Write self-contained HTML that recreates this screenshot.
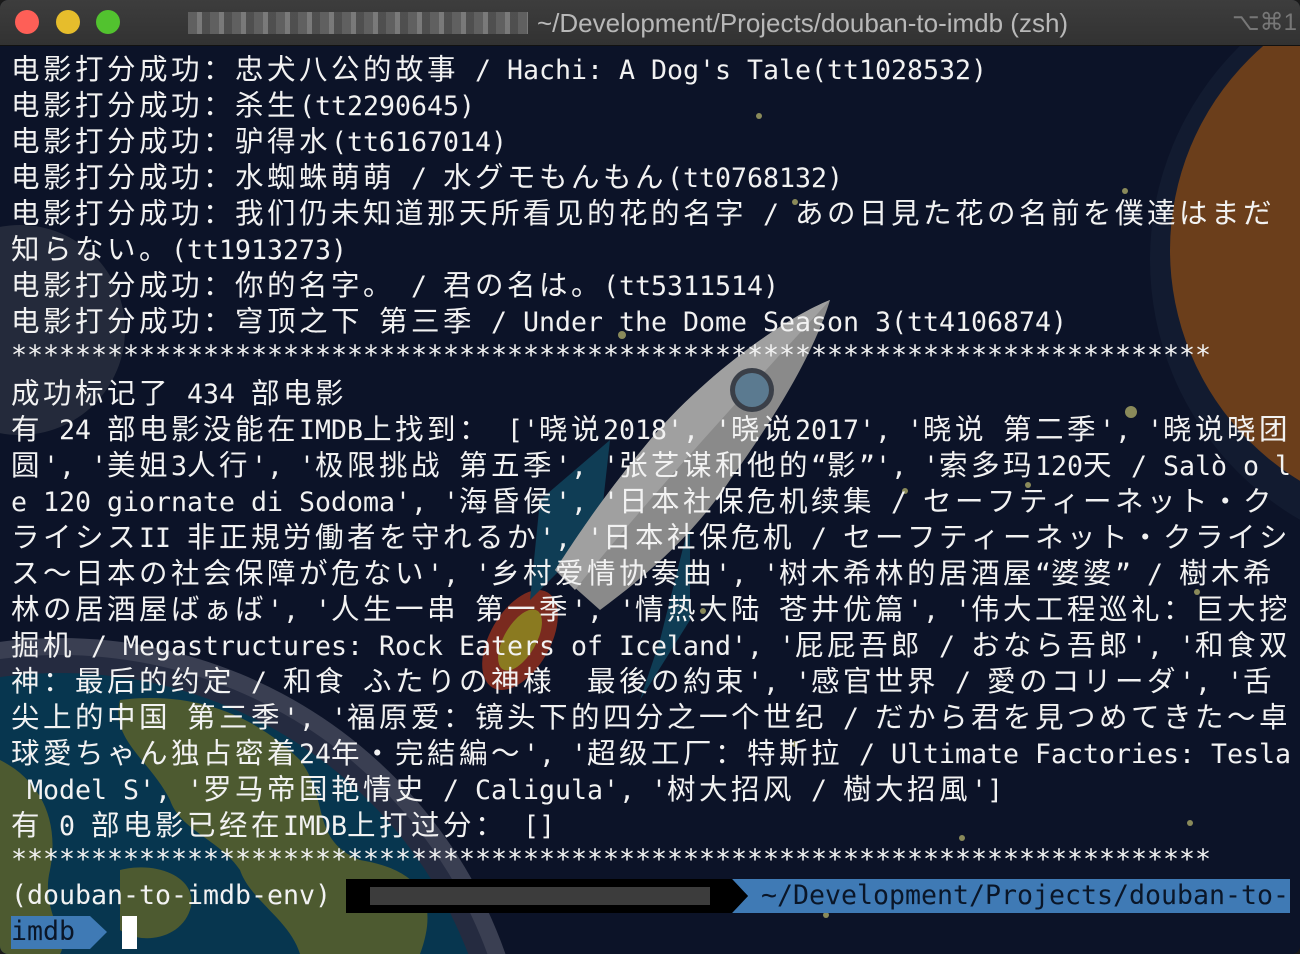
<!DOCTYPE html>
<html><head><meta charset="utf-8">
<style>
html,body{margin:0;padding:0;width:1300px;height:954px;overflow:hidden;background:#1a1a1a;}
#win{position:absolute;left:0;top:0;width:1300px;height:954px;border-radius:8px;overflow:hidden;background:#0c1328;}
#title{position:absolute;left:0;top:0;width:1300px;height:45px;background:linear-gradient(#3d3d3d,#323232);border-bottom:1px solid #111;}
.tl{position:absolute;top:10px;width:24px;height:24px;border-radius:50%;}
#ttxt{position:absolute;left:537px;top:8px;font:26px "Liberation Sans",sans-serif;color:#b8b8b8;}
#blur1{position:absolute;left:188px;top:12px;width:340px;height:22px;background:repeating-linear-gradient(90deg,#6a6a6a 0 9px,#8a8a8a 9px 14px,#555 14px 22px);opacity:.8;}
#kb{position:absolute;left:1232px;top:8px;font:24px "Liberation Sans",sans-serif;color:#777;}
#bg{position:absolute;left:0;top:45px;}
#term{position:absolute;left:11px;top:50px;width:1289px;height:904px;overflow:hidden;font-family:"DejaVu Sans Mono","Noto Sans CJK JP",monospace;font-size:26.6px;color:#f2f2f2;}
.ln{position:absolute;left:0;height:36px;line-height:36px;white-space:pre;}
.ln span{display:inline-block;width:16px;text-align:center;}
.ln span.w{width:32px;text-align:left;font-family:"Noto Sans CJK SC","Noto Sans CJK JP",sans-serif;font-size:28.5px;}
</style></head><body>
<div id="win">
<svg id="bg" width="1300" height="909" viewBox="0 45 1300 909">
 <rect x="0" y="45" width="1300" height="909" fill="#0c1328"/>
 <circle cx="1450" cy="260" r="300" fill="#121b30"/>
 <circle cx="1440" cy="250" r="270" fill="#6b3e1b"/>
 <circle cx="20" cy="330" r="105" fill="#2b3140" opacity=".8"/>
 <circle cx="60" cy="1110" r="472" fill="#3a3f52"/>
 <circle cx="60" cy="1110" r="455" fill="#252b40"/>
 <circle cx="60" cy="1110" r="437" fill="#07364f"/>
 <path d="M120 700 C200 690 260 720 300 760 C330 800 310 840 360 860 C420 870 440 900 420 954 L300 954 C290 920 250 900 240 870 C220 840 180 830 170 800 C150 760 110 740 120 700Z" fill="#4d5a30"/>
 <path d="M0 760 C40 780 60 820 50 870 C40 910 70 940 60 954 L0 954Z" fill="#4d5a30"/>
 <path d="M120 870 C160 860 200 880 190 910 C180 940 140 945 120 930Z" fill="#4d5a30"/>
 <g>
  <ellipse cx="520" cy="640" rx="30" ry="55" transform="rotate(30 520 640)" fill="#7a2a1f"/>
  <ellipse cx="520" cy="640" rx="16" ry="34" transform="rotate(30 520 640)" fill="#8a7a20"/>
  <path d="M610 440 L540 500 L530 600 L600 530Z" fill="#0f3d55"/>
  <path d="M690 520 L660 640 L640 700 L690 620Z" fill="#0f3d55"/>
  <path d="M830 300 C780 320 700 380 650 440 C600 500 575 540 555 570 L600 610 C640 580 690 540 730 480 C780 410 815 350 830 300Z" fill="#8a8a8a"/>
  <path d="M830 300 C780 320 700 380 650 440 C600 500 575 540 555 570 L575 590 C630 520 720 420 830 300Z" fill="#a0a0a0"/>
  <circle cx="752" cy="390" r="22" fill="#3a3f48"/>
  <circle cx="752" cy="390" r="17" fill="#5b7a90"/>
 </g>
 <g fill="#8a8a5a">
  <circle cx="759" cy="116" r="3"/><circle cx="622" cy="335" r="4"/><circle cx="1131" cy="412" r="6"/>
  <circle cx="1125" cy="191" r="3"/><circle cx="905" cy="491" r="3"/><circle cx="1028" cy="485" r="3"/>
  <circle cx="1197" cy="592" r="3"/><circle cx="1190" cy="823" r="3"/><circle cx="962" cy="838" r="3"/>
  <circle cx="795" cy="202" r="3"/><circle cx="703" cy="611" r="3"/><circle cx="826" cy="915" r="3"/>
  <circle cx="795" cy="744" r="3"/>
 </g>
 <rect x="346" y="879" width="386" height="34" fill="#000"/>
 <rect x="370" y="887" width="340" height="18" fill="#555" opacity=".7"/>
 <path d="M732 879 L1290 879 L1290 913 L732 913 L748 896Z" fill="#3f7ab5"/>
 <path d="M732 879 L748 896 L732 913Z" fill="#000"/>
 <path d="M11 916 L90 916 L107 932 L90 949 L11 949Z" fill="#3f7ab5"/>
 <rect x="122" y="916" width="15" height="33" fill="#fff"/>
</svg>
<div id="title">
 <div class="tl" style="left:15px;background:#fe5f57"></div>
 <div class="tl" style="left:56px;background:#e6bd2c"></div>
 <div class="tl" style="left:96px;background:#52c22f"></div>
 <div id="blur1"></div>
 <div id="ttxt">~/Development/Projects/douban-to-imdb (zsh)</div>
 <div id="kb">⌥⌘1</div>
</div>
<div id="term"></div>
</div>
<script>
var L=[
"电影打分成功：忠犬八公的故事 / Hachi: A Dog's Tale(tt1028532)",
"电影打分成功：杀生(tt2290645)",
"电影打分成功：驴得水(tt6167014)",
"电影打分成功：水蜘蛛萌萌 / 水グモもんもん(tt0768132)",
"电影打分成功：我们仍未知道那天所看见的花的名字 / あの日見た花の名前を僕達はまだ",
"知らない。(tt1913273)",
"电影打分成功：你的名字。 / 君の名は。(tt5311514)",
"电影打分成功：穹顶之下 第三季 / Under the Dome Season 3(tt4106874)",
"***************************************************************************",
"成功标记了 434 部电影",
"有 24 部电影没能在IMDB上找到： ['晓说2018', '晓说2017', '晓说 第二季', '晓说晓团",
"圆', '美姐3人行', '极限挑战 第五季', '张艺谋和他的“影”', '索多玛120天 / Salò o l",
"e 120 giornate di Sodoma', '海昏侯', '日本社保危机续集 / セーフティーネット・ク",
"ライシスII 非正規労働者を守れるか', '日本社保危机 / セーフティーネット・クライシ",
"ス～日本の社会保障が危ない', '乡村爱情协奏曲', '树木希林的居酒屋“婆婆” / 樹木希",
"林の居酒屋ばぁば', '人生一串 第一季', '情热大陆 苍井优篇', '伟大工程巡礼：巨大挖",
"掘机 / Megastructures: Rock Eaters of Iceland', '屁屁吾郎 / おなら吾郎', '和食双",
"神：最后的约定 / 和食 ふたりの神様  最後の約束', '感官世界 / 愛のコリーダ', '舌",
"尖上的中国 第三季', '福原爱：镜头下的四分之一个世纪 / だから君を見つめてきた～卓",
"球愛ちゃん独占密着24年・完結編～', '超级工厂：特斯拉 / Ultimate Factories: Tesla",
" Model S', '罗马帝国艳情史 / Caligula', '树大招风 / 樹大招風']",
"有 0 部电影已经在IMDB上打过分： []",
"***************************************************************************",
"(douban-to-imdb-env)",
"imdb"
];
var t=document.getElementById('term'),h='';
for(var i=0;i<L.length;i++){
 var s=L[i],o='';
 for(var j=0;j<s.length;j++){var c=s[j],k=c.charCodeAt(0);
  var w=(k>=0x2E80&&k!==0x201C&&k!==0x201D)||(k>=0xFF00&&k<=0xFF60);
  if(c==' ')c='&nbsp;';
  o+='<span'+(w?' class="w"':'')+'>'+c+'</span>';}
 var st=i==L.length-1?'color:#0a1628':'';
 h+='<div class="ln" style="top:'+(i*36)+'px;'+st+'">'+o+'</div>';
}
t.innerHTML=h;
var p=document.createElement('div');p.className='ln';p.style.cssText='top:828px;left:750px;color:#0a1628';
p.innerHTML='~/Development/Projects/douban-to-'.split('').map(function(c){return '<span>'+c+'</span>'}).join('');
t.appendChild(p);
</script>
</body></html>
